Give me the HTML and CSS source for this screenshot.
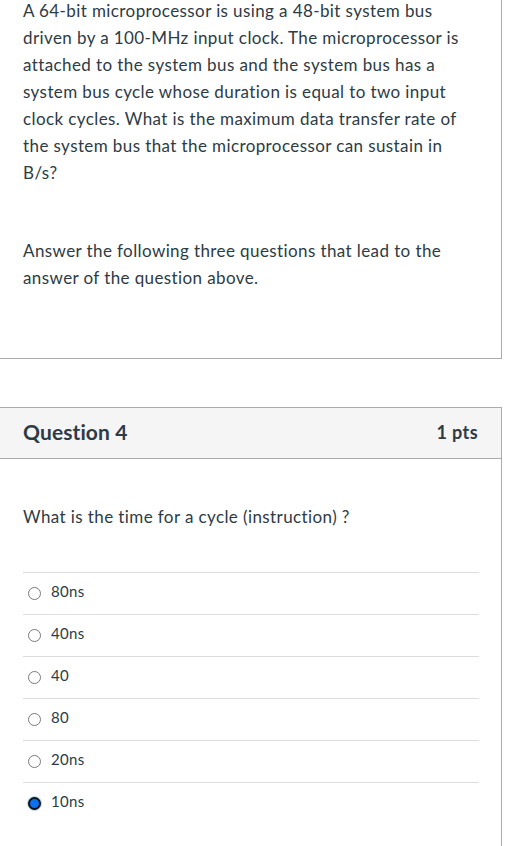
FILE: index.html
```html
<!DOCTYPE html>
<html>
<head>
<meta charset="utf-8">
<link rel="stylesheet" href="styles.css">
</head>
<body>
<div class="page">
  <section class="card card-prev">
    <div class="card-body">
      <p class="text first">A 64-bit microprocessor is using a 48-bit system bus driven by a 100-MHz input clock. The microprocessor is attached to the system bus and the system bus has a system bus cycle whose duration is equal to two input clock cycles. What is the maximum data transfer rate of the system bus that the microprocessor can sustain in B/s?</p>
      <p class="text second">Answer the following three questions that lead to the answer of the question above.</p>
    </div>
  </section>

  <section class="card card-q">
    <header class="q-header">
      <h2 class="q-title">Question 4</h2>
      <span class="q-pts">1 pts</span>
    </header>
    <div class="q-body">
      <p class="q-text">What is the time for a cycle (instruction) ?</p>
      <ul class="answers">
        <li class="answer"><span class="radio"></span><span class="label">80ns</span></li>
        <li class="answer"><span class="radio"></span><span class="label">40ns</span></li>
        <li class="answer"><span class="radio"></span><span class="label">40</span></li>
        <li class="answer"><span class="radio"></span><span class="label">80</span></li>
        <li class="answer"><span class="radio"></span><span class="label">20ns</span></li>
        <li class="answer"><span class="radio checked"></span><span class="label">10ns</span></li>
      </ul>
    </div>
  </section>
</div>
</body>
</html>
```

FILE: styles.css
```css
html, body {
  margin: 0;
  padding: 0;
  background: #ffffff;
}

body {
  font-family: Lato, "Liberation Sans", sans-serif;
  color: #2d3b45;
  overflow: hidden;
}

.page {
  width: 502px;
}

.card {
  border: 1px solid #ababab;
  border-left: 0;
  background: #fff;
}

.card-prev {
  border-top: 0;
}

.card-body {
  padding: 0 23px 67px 23px;
}

.text {
  margin: 0;
  font-size: 17px;
  line-height: 27px;
  letter-spacing: 0.4px;
}

.text.first {
  margin-top: -3.3px;
}

.text.second {
  margin-top: 51.3px;
}

.card-q {
  margin-top: 48px;
  height: 460px;
  border-bottom: 0;
}

.q-header {
  height: 50px;
  background: #f5f5f5;
  border-bottom: 1px solid #ababab;
  display: flex;
  align-items: center;
  justify-content: space-between;
  padding: 0 23px;
}

.q-title {
  margin: 0 0 3px 0;
  font-size: 21px;
  font-weight: 700;
  color: #2d3b45;
  letter-spacing: 0.1px;
}

.q-pts {
  margin-bottom: 3px;
  font-size: 18px;
  font-weight: 700;
  color: #2d3b45;
  letter-spacing: 0.4px;
}

.q-body {
  padding: 44px 22px 0 23px;
}

.q-text {
  margin: 0;
  font-size: 17px;
  line-height: 27px;
  letter-spacing: 0.4px;
}

.answers {
  list-style: none;
  margin: 42px 0 0 0;
  padding: 0;
}

.answer {
  box-sizing: border-box;
  display: flex;
  align-items: center;
  height: 42px;
  border-top: 1px solid #dddddd;
  padding: 0 0 4px 5px;
  gap: 10px;
  font-size: 15px;
  letter-spacing: 0.3px;
}

.radio {
  width: 11px;
  height: 11px;
  border: 1px solid #7a7a7a;
  border-radius: 50%;
  background: #fff;
  flex: none;
  margin-top: 3px;
}

.radio.checked {
  width: 9px;
  height: 9px;
  border: 2px solid #111;
  background: #0a72f0;
  box-shadow: 0 0 0 1px #b9d6f7;
}

.label {
  line-height: 17px;
}
```
